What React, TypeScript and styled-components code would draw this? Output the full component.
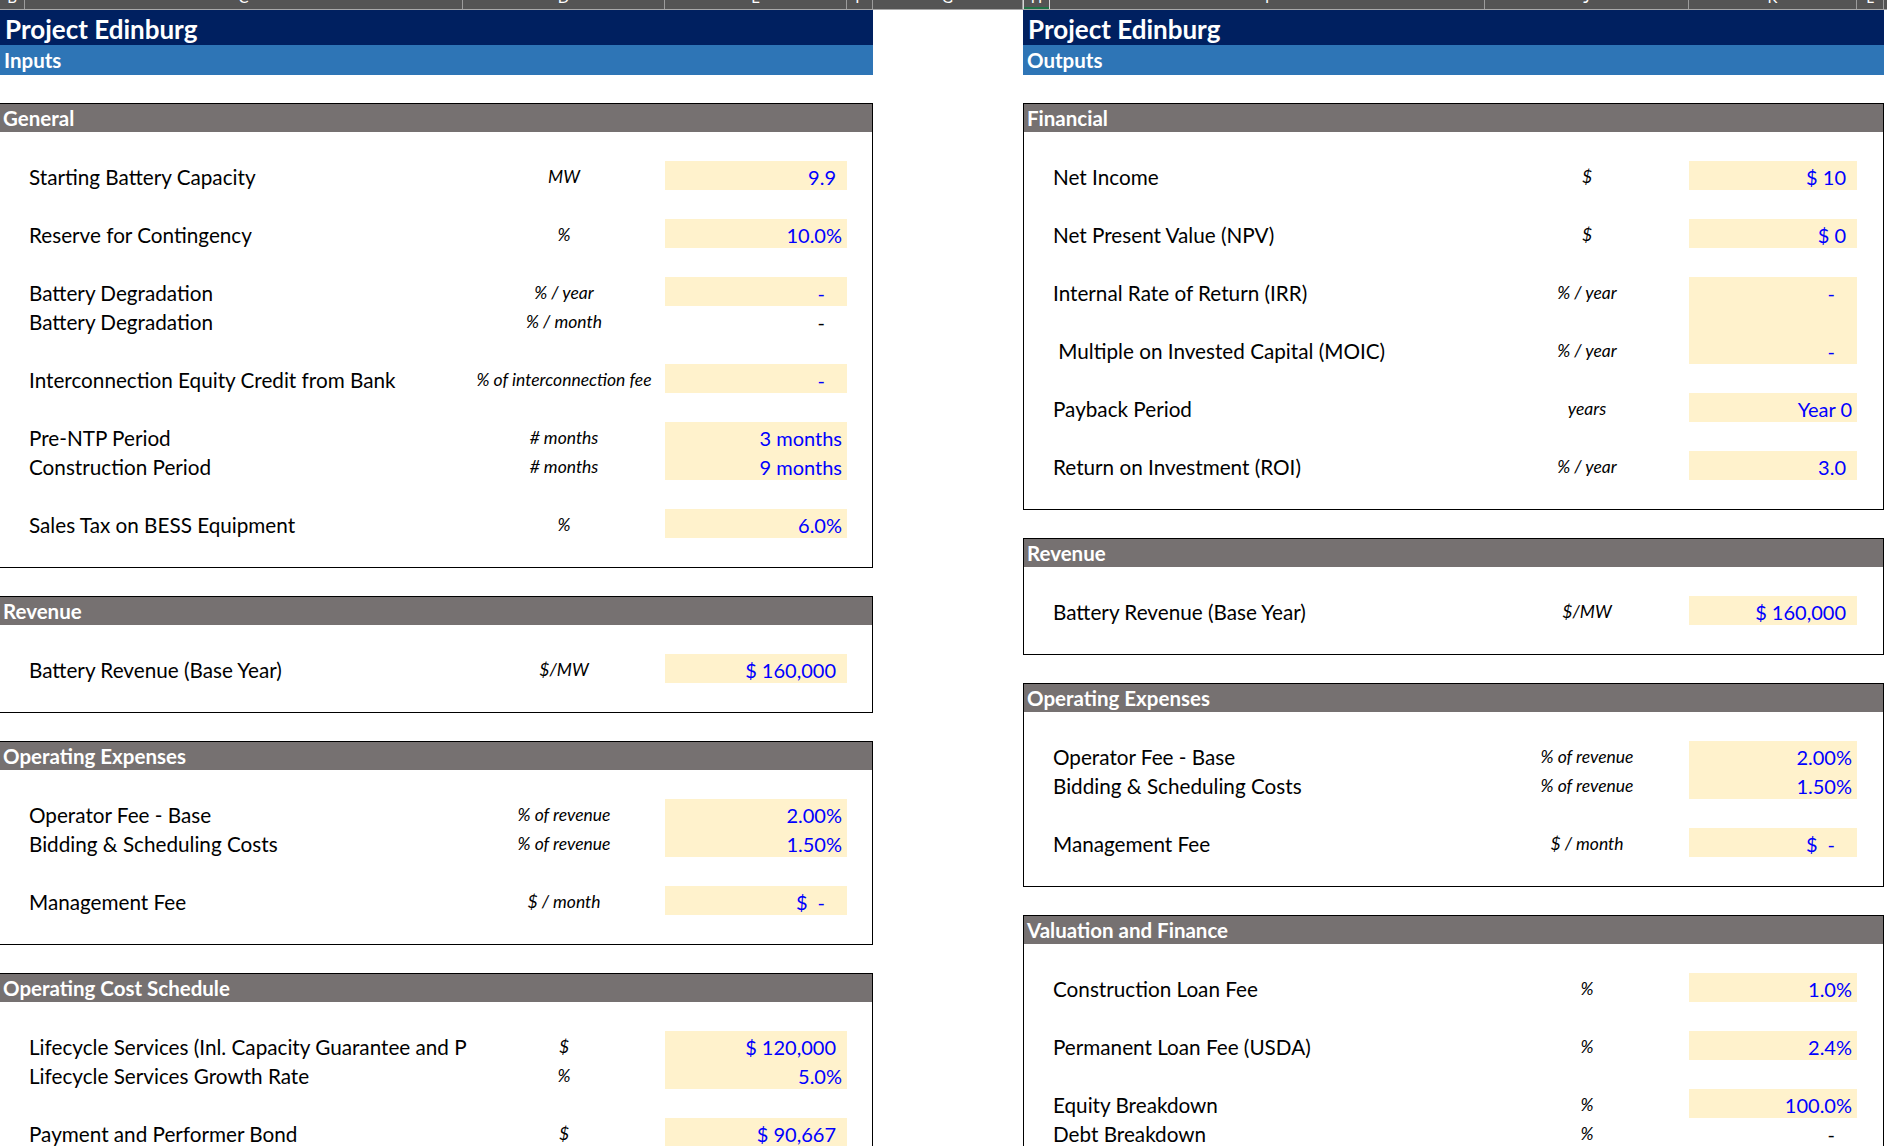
import React from 'react';
import styled, { createGlobalStyle } from 'styled-components';

type Side = 'left' | 'right';
type Pad = 'pct' | 'num' | 'dash';

interface IItem {
  label?: string;
  unit?: string;
  value?: string;
  pad?: Pad;
  filled?: boolean;
  plain?: boolean;
}

interface ISection {
  title: string;
  groups: IItem[][];
}

const GlobalStyle = createGlobalStyle`
  html, body {
    margin: 0;
    padding: 0;
    background: #ffffff;
  }
  body {
    font-family: Lato, 'Liberation Sans', sans-serif;
    color: #000000;
  }
`;

const Sheet = styled.div`
  width: 1887px;
  height: 1146px;
  overflow: hidden;
  background: #ffffff;
`;

const ColumnBar = styled.div`
  display: flex;
  height: 9px;
  background: #545454;
  border-bottom: 1px solid #a8a8a8;
  overflow: hidden;
`;

const ColumnHead = styled.div<{ $w: number; $active?: boolean }>`
  flex: 0 0 ${(p) => p.$w}px;
  box-sizing: border-box;
  height: 9px;
  border-right: 1px solid ${(p) => (p.$active ? '#d6d6d6' : '#9c9c9c')};
  ${(p) => (p.$active ? 'border-left: 1px solid #d6d6d6; box-shadow: inset 0 -2px 0 #1e7145;' : '')}
  color: #ffffff;
  font-size: 15px;
  line-height: 16px;
  text-align: center;
  overflow: hidden;
`;

const Letter = styled.span`
  display: block;
  margin-top: -11px;
`;

const Panels = styled.div`
  display: flex;
  align-items: flex-start;
  gap: 150px;
`;

const Panel = styled.div<{ $w: number }>`
  flex: 0 0 ${(p) => p.$w}px;
  width: ${(p) => p.$w}px;
`;

const TitleBar = styled.div`
  box-sizing: border-box;
  height: 35px;
  padding: 3px 0 0 5px;
  background: #002060;
  color: #ffffff;
  font-weight: 700;
  font-size: 26px;
  line-height: 32px;
`;

const SubBar = styled.div`
  box-sizing: border-box;
  height: 30px;
  padding: 1px 0 0 4px;
  background: #2e75b6;
  color: #ffffff;
  font-weight: 700;
  font-size: 20.5px;
  line-height: 29px;
`;

const Box = styled.section<{ $side: Side }>`
  margin-top: 28px;
  border: 1px solid #000000;
  ${(p) => (p.$side === 'left' ? 'border-left: none;' : '')}
`;

const BoxHead = styled.div`
  height: 28px;
  background: #767171;
  color: #ffffff;
  font-weight: 700;
  font-size: 20.5px;
  line-height: 28px;
  padding-left: 3px;
`;

const BoxBody = styled.div`
  display: flex;
  flex-direction: column;
  gap: 29px;
  padding: 29px 0;
`;

const Group = styled.div`
  display: flex;
  flex-direction: column;
`;

const Row = styled.div<{ $side: Side }>`
  display: grid;
  grid-template-columns: ${(p) =>
    p.$side === 'left'
      ? '25px 438px 202px 182px 25px'
      : '26px 435px 204px 168px 26px'};
  height: 29px;
`;

const Cell = styled.div`
  box-sizing: border-box;
  height: 29px;
  padding-top: 3px;
  line-height: 26px;
  white-space: pre;
`;

const Label = styled(Cell)<{ $side: Side }>`
  grid-column: 2;
  padding-left: ${(p) => (p.$side === 'left' ? 4 : 3)}px;
  font-size: 20.7px;
`;

const Unit = styled(Cell)`
  grid-column: 3;
  text-align: center;
  font-style: italic;
  font-size: 17.5px;
`;

const padding: Record<Pad, number> = { pct: 5, num: 11, dash: 22 };

const Value = styled(Cell)<{ $filled: boolean; $pad: Pad; $plain: boolean }>`
  grid-column: 4;
  background: ${(p) => (p.$filled ? '#fff2cc' : 'transparent')};
  color: ${(p) => (p.$plain ? '#000000' : '#0000ff')};
  text-align: right;
  padding-right: ${(p) => padding[p.$pad]}px;
  font-size: 20px;
`;

const Dollar = styled.span`
  margin-right: 10px;
`;

const columns: [string, number][] = [
  ['B', 25],
  ['C', 438],
  ['D', 202],
  ['E', 182],
  ['F', 26],
  ['G', 150],
  ['H', 27],
  ['I', 435],
  ['J', 204],
  ['K', 168],
  ['L', 27],
  ['M', 40],
];

const inputs: ISection[] = [
  {
    title: 'General',
    groups: [
      [{ label: 'Starting Battery Capacity', unit: 'MW', value: '9.9', pad: 'num' }],
      [{ label: 'Reserve for Contingency', unit: '%', value: '10.0%' }],
      [
        { label: 'Battery Degradation', unit: '% / year', value: '-', pad: 'dash' },
        { label: 'Battery Degradation', unit: '% / month', value: '-', pad: 'dash', filled: false, plain: true },
      ],
      [{ label: 'Interconnection Equity Credit from Bank', unit: '% of interconnection fee', value: '-', pad: 'dash' }],
      [
        { label: 'Pre-NTP Period', unit: '# months', value: '3 months' },
        { label: 'Construction Period', unit: '# months', value: '9 months' },
      ],
      [{ label: 'Sales Tax on BESS Equipment', unit: '%', value: '6.0%' }],
    ],
  },
  {
    title: 'Revenue',
    groups: [[{ label: 'Battery Revenue (Base Year)', unit: '$/MW', value: '$ 160,000', pad: 'num' }]],
  },
  {
    title: 'Operating Expenses',
    groups: [
      [
        { label: 'Operator Fee - Base', unit: '% of revenue', value: '2.00%' },
        { label: 'Bidding & Scheduling Costs', unit: '% of revenue', value: '1.50%' },
      ],
      [{ label: 'Management Fee', unit: '$ / month', value: '$ -', pad: 'dash' }],
    ],
  },
  {
    title: 'Operating Cost Schedule',
    groups: [
      [
        { label: 'Lifecycle Services (Inl. Capacity Guarantee and P', unit: '$', value: '$ 120,000', pad: 'num' },
        { label: 'Lifecycle Services Growth Rate', unit: '%', value: '5.0%' },
      ],
      [{ label: 'Payment and Performer Bond', unit: '$', value: '$ 90,667', pad: 'num' }],
      [{ label: '', unit: '', value: '', filled: false }],
    ],
  },
];

const outputs: ISection[] = [
  {
    title: 'Financial',
    groups: [
      [{ label: 'Net Income', unit: '$', value: '$ 10', pad: 'num' }],
      [{ label: 'Net Present Value (NPV)', unit: '$', value: '$ 0', pad: 'num' }],
      [
        { label: 'Internal Rate of Return (IRR)', unit: '% / year', value: '-', pad: 'dash' },
        { value: '' },
        { label: ' Multiple on Invested Capital (MOIC)', unit: '% / year', value: '-', pad: 'dash' },
      ],
      [{ label: 'Payback Period', unit: 'years', value: 'Year 0' }],
      [{ label: 'Return on Investment (ROI)', unit: '% / year', value: '3.0', pad: 'num' }],
    ],
  },
  {
    title: 'Revenue',
    groups: [[{ label: 'Battery Revenue (Base Year)', unit: '$/MW', value: '$ 160,000', pad: 'num' }]],
  },
  {
    title: 'Operating Expenses',
    groups: [
      [
        { label: 'Operator Fee - Base', unit: '% of revenue', value: '2.00%' },
        { label: 'Bidding & Scheduling Costs', unit: '% of revenue', value: '1.50%' },
      ],
      [{ label: 'Management Fee', unit: '$ / month', value: '$ -', pad: 'dash' }],
    ],
  },
  {
    title: 'Valuation and Finance',
    groups: [
      [{ label: 'Construction Loan Fee', unit: '%', value: '1.0%' }],
      [{ label: 'Permanent Loan Fee (USDA)', unit: '%', value: '2.4%' }],
      [
        { label: 'Equity Breakdown', unit: '%', value: '100.0%' },
        { label: 'Debt Breakdown', unit: '%', value: '-', pad: 'dash', filled: false, plain: true },
      ],
    ],
  },
];

const ValueText: React.FC<{ value: string }> = ({ value }) => {
  if (value === '$ -') {
    return (
      <>
        <Dollar>$</Dollar>-
      </>
    );
  }
  return <>{value}</>;
};

const ItemRow: React.FC<{ item: IItem; side: Side }> = ({ item, side }) => {
  const { label = '', unit = '', value = '', pad = 'pct', filled = true, plain = false } = item;
  return (
    <Row $side={side}>
      <Label $side={side}>{label}</Label>
      <Unit>{unit}</Unit>
      <Value $filled={filled} $pad={pad} $plain={plain}>
        <ValueText value={value} />
      </Value>
    </Row>
  );
};

const SheetPanel: React.FC<{ side: Side; subtitle: string; sections: ISection[] }> = ({
  side,
  subtitle,
  sections,
}) => {
  return (
    <Panel $w={side === 'left' ? 873 : 861}>
      <TitleBar>Project Edinburg</TitleBar>
      <SubBar>{subtitle}</SubBar>
      {sections.map((section) => (
        <Box key={section.title} $side={side}>
          <BoxHead>{section.title}</BoxHead>
          <BoxBody>
            {section.groups.map((group, i) => (
              <Group key={i}>
                {group.map((item, j) => (
                  <ItemRow key={j} item={item} side={side} />
                ))}
              </Group>
            ))}
          </BoxBody>
        </Box>
      ))}
    </Panel>
  );
};

export default function App() {
  return (
    <>
      <GlobalStyle />
      <Sheet>
        <ColumnBar>
          {columns.map(([name, w]) => (
            <ColumnHead key={name} $w={w} $active={name === 'H'}>
              <Letter>{name}</Letter>
            </ColumnHead>
          ))}
        </ColumnBar>
        <Panels>
          <SheetPanel side="left" subtitle="Inputs" sections={inputs} />
          <SheetPanel side="right" subtitle="Outputs" sections={outputs} />
        </Panels>
      </Sheet>
    </>
  );
}
